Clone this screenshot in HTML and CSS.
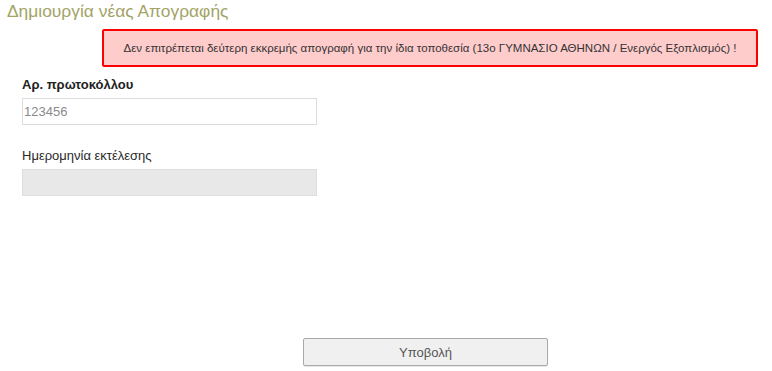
FILE: index.html
```html
<!DOCTYPE html>
<html lang="el">
<head>
<meta charset="utf-8">
<link rel="stylesheet" href="styles.css">
</head>
<body>
<div class="page">
  <h1 class="title">Δημιουργία νέας Απογραφής</h1>
  <div class="alert">Δεν επιτρέπεται δεύτερη εκκρεμής απογραφή για την ίδια τοποθεσία (13ο ΓΥΜΝΑΣΙΟ ΑΘΗΝΩΝ / Ενεργός Εξοπλισμός) !</div>
  <form class="form">
    <label class="label first">Αρ. πρωτοκόλλου</label>
    <div class="input">123456</div>
    <label class="label">Ημερομηνία εκτέλεσης</label>
    <div class="input disabled"></div>
    <div class="actions">
      <button type="button" class="btn">Υποβολή</button>
    </div>
  </form>
</div>
</body>
</html>
```
FILE: styles.css
```css
html, body {
  margin: 0;
  padding: 0;
  background: #fff;
  font-family: "Liberation Sans", Arial, sans-serif;
}
.page {
  width: 772px;
  height: 371px;
  overflow: hidden;
}
.title {
  margin: 0;
  padding: 1px 0 0 7px;
  font-size: 17.4px;
  font-weight: normal;
  line-height: 21px;
  color: #a3a366;
}
.alert {
  margin: 7px 0 0 102px;
  width: 652px;
  height: 34px;
  box-sizing: content-box;
  border: 2px solid #ff0000;
  border-radius: 2px;
  background: #ffcccc;
  color: #333;
  font-size: 11.5px;
  line-height: 34px;
  text-align: center;
  white-space: nowrap;
}
.form {
  padding-left: 22px;
  display: flex;
  flex-direction: column;
  align-items: flex-start;
}
.label {
  display: block;
  font-size: 13px;
  line-height: 16px;
  color: #2a2a2a;
  margin-top: 23px;
}
.label.first {
  font-weight: bold;
  color: #222;
  margin-top: 10px;
}
.input {
  margin-top: 5px;
  width: 292px;
  height: 25px;
  border: 1px solid #dcdcdc;
  background: #fff;
  color: #8a8a8a;
  font-size: 13px;
  line-height: 25px;
  padding-left: 1px;
}
.input.disabled {
  background: #e8e8e8;
  border-color: #dedede;
}
.actions {
  margin-top: 142px;
  padding-left: 281px;
}
.btn {
  width: 245px;
  height: 28px;
  border: 1px solid #a9a9a9;
  border-radius: 2px;
  background: #f0f0f0;
  box-shadow: 0 1px 1px rgba(0,0,0,0.1);
  color: #555;
  font-family: "Liberation Sans", Arial, sans-serif;
  font-size: 13px;
  padding: 0;
}
```
